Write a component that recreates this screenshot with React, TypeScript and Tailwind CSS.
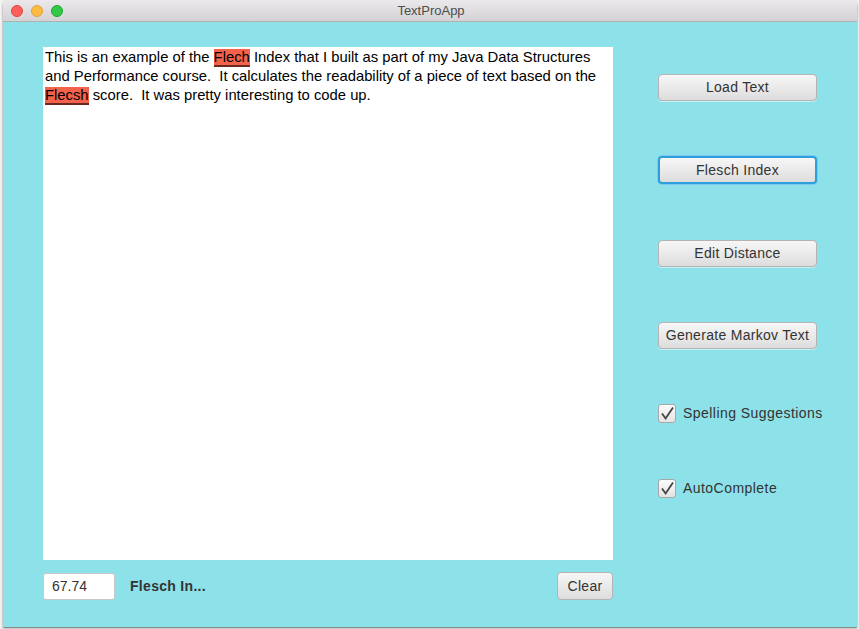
import React from "react";

const font = { fontFamily: '"Liberation Sans", Arial, sans-serif' };

function Btn({ label, focused }: { label: string; focused?: boolean }) {
  return (
    <div
      className={
        "flex w-[159px] items-center justify-center rounded-[4px] bg-gradient-to-b from-[#f7f7f7] to-[#dddddd] text-[14px] tracking-[0.3px] text-[#333333] " +
        (focused
          ? "h-[28px] border-2 border-[#2e9fdc] shadow-[0_0_0_1px_#7cc8ee]"
          : "h-[27px] border border-[#b4b4b4] shadow-[0_1px_0_#ffffff80]")
      }
    >
      {label}
    </div>
  );
}

function Check({ label }: { label: string }) {
  return (
    <div className="flex h-[19px] items-center">
      <div className="flex h-[19px] w-[18px] items-center justify-center rounded-[3px] border border-[#a8a8a8] bg-gradient-to-b from-[#fbfbfb] to-[#e3e3e3]">
        <svg width="15" height="15" viewBox="0 0 15 15">
          <path d="M2 7.5 L5.6 12.5 L13 1.5" fill="none" stroke="#444" strokeWidth="1.8" strokeLinejoin="miter" />
        </svg>
      </div>
      <span className="ml-[7px] text-[14px] tracking-[0.45px] text-[#333333]">{label}</span>
    </div>
  );
}

function Hl({ children }: { children: React.ReactNode }) {
  return <span className="border-b-2 border-[#6a2a20] bg-[#f5624c]">{children}</span>;
}

export default function App() {
  return (
    <div className="h-[629px] w-[859px] overflow-hidden bg-[#f2f2f2]" style={font}>
      <div className="ml-[3px] flex h-[627px] w-[854px] flex-col overflow-hidden rounded-t-[5px] shadow-[0_1px_2px_rgba(0,0,0,0.6)]">
        {/* title bar */}
        <div className="relative flex h-[22px] items-center border-b border-[#b1b1b1] bg-gradient-to-b from-[#ebe9eb] to-[#d4d2d4]">
          <div className="ml-[8px] flex gap-[8px]">
            <div className="h-[12px] w-[12px] rounded-full border border-[#e0443e] bg-[#fc605b]" />
            <div className="h-[12px] w-[12px] rounded-full border border-[#dea236] bg-[#fdbc40]" />
            <div className="h-[12px] w-[12px] rounded-full border border-[#1aab29] bg-[#34c84a]" />
          </div>
          <div className="absolute inset-0 flex items-center justify-center pl-[2px] text-[13px] text-[#4d4d4d]">
            TextProApp
          </div>
        </div>
        {/* content */}
        <div className="flex flex-1 bg-[#8de1e8]">
          <div className="ml-[40px] mt-[25px] flex flex-col">
            <div className="h-[513px] w-[570px] bg-white px-[2px] pt-[1px] text-[14.8px] leading-[19px] text-black">
              This is an example of the <Hl>Flech</Hl> Index that I built as part of my Java Data Structures and
              Performance course.&nbsp; It calculates the readability of a piece of text based on the{" "}
              <Hl>Flecsh</Hl> score.&nbsp; It was pretty interesting to code up.
            </div>
            <div className="mt-[12px] flex h-[28px] items-center">
              <div className="flex h-[27px] w-[72px] items-center rounded-[3px] border border-[#c8c8c8] bg-white pl-[8px] text-[14px] text-[#333333]">
                67.74
              </div>
              <div className="ml-[15px] text-[14px] font-bold tracking-[0.3px] text-[#333333]">Flesch In...</div>
              <div className="ml-auto flex h-[28px] w-[56px] items-center justify-center rounded-[4px] border border-[#b4b4b4] bg-gradient-to-b from-[#f7f7f7] to-[#dddddd] text-[14px] tracking-[0.3px] text-[#333333]">
                Clear
              </div>
            </div>
          </div>
          <div className="ml-[45px] mt-[52px] flex flex-col">
            <Btn label="Load Text" />
            <div className="mt-[55px]">
              <Btn label="Flesch Index" focused />
            </div>
            <div className="mt-[56px]">
              <Btn label="Edit Distance" />
            </div>
            <div className="mt-[55px]">
              <Btn label="Generate Markov Text" />
            </div>
            <div className="mt-[55px]">
              <Check label="Spelling Suggestions" />
            </div>
            <div className="mt-[56px]">
              <Check label="AutoComplete" />
            </div>
          </div>
        </div>
      </div>
    </div>
  );
}
